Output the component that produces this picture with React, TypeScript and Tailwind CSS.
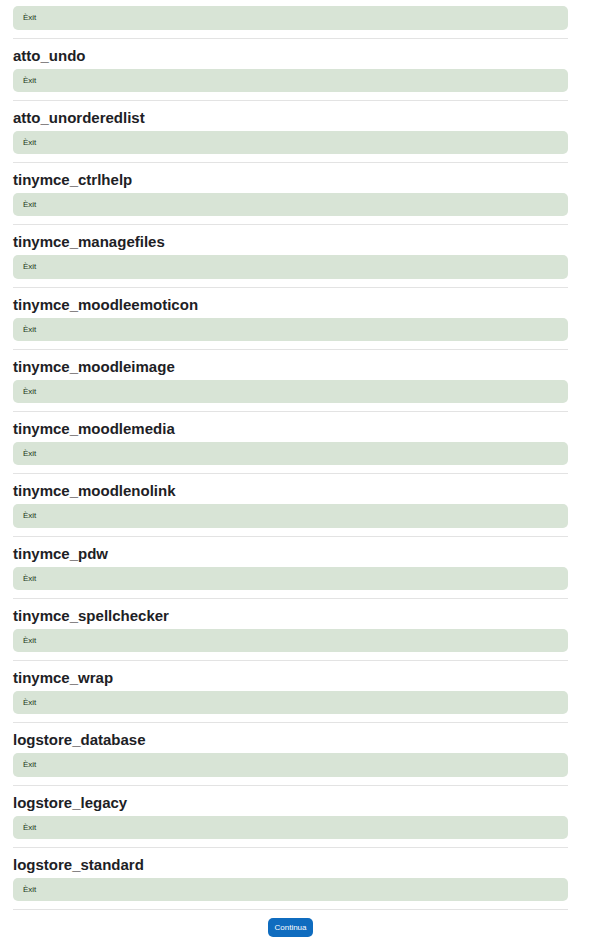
const plugins: string[] = [
  '',
  'atto_undo',
  'atto_unorderedlist',
  'tinymce_ctrlhelp',
  'tinymce_managefiles',
  'tinymce_moodleemoticon',
  'tinymce_moodleimage',
  'tinymce_moodlemedia',
  'tinymce_moodlenolink',
  'tinymce_pdw',
  'tinymce_spellchecker',
  'tinymce_wrap',
  'logstore_database',
  'logstore_legacy',
  'logstore_standard',
];

function PluginResult({ name }: { name: string }) {
  return (
    <section className="group">
      {name && (
        <h2 className="mb-1 pt-2 text-[15px] leading-[18px] font-bold">{name}</h2>
      )}
      <div
        role="alert"
        className="rounded-[5px] bg-[#d8e4d6] px-[10px] pt-[7px] pb-[6px] text-[8px] leading-[10px] text-[#1c3a19] group-nth-[4n+1]:pb-[7px]"
      >
        Èxit
      </div>
      <hr className="mt-2 border-t border-[#e3e3e3]" />
    </section>
  );
}

export default function App() {
  return (
    <main className="bg-white pt-[6px] pr-[21px] pb-2 pl-[13px] font-['Liberation_Sans',Arial,sans-serif] text-[#1d2125]">
      <div>
        {plugins.map((name) => (
          <PluginResult key={name} name={name} />
        ))}
      </div>
      <form className="mt-2 flex justify-center" onSubmit={(e) => e.preventDefault()}>
        <button
          type="submit"
          className="min-w-[45px] rounded-[5px] bg-[#0f6cbf] px-[6px] pt-[5px] pb-1 text-[8px] leading-[10px] text-white"
        >
          Continua
        </button>
      </form>
    </main>
  );
}
